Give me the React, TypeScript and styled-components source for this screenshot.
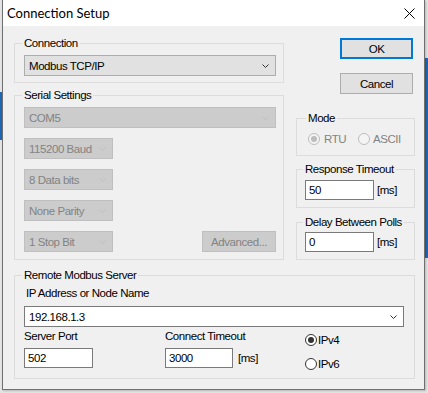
import React from "react";
import styled, { createGlobalStyle } from "styled-components";

const UI = '"Liberation Sans", Arial, sans-serif';
const FS = "11.5px";
const LS = "-0.45px";

const Global = createGlobalStyle`
  html, body { margin: 0; padding: 0; }
  body {
    width: 428px;
    height: 393px;
    overflow: hidden;
    font-family: ${UI};
    white-space: nowrap;
    letter-spacing: ${LS};
    background:
      linear-gradient(#1f66b5, #1f66b5) right 0 top 58px / 3px 200px no-repeat,
      linear-gradient(#1f66b5, #1f66b5) left 0 top 92px / 2px 48px no-repeat,
      #e4e4e4;
  }
`;

const Screen = styled.div`
  width: 428px;
  height: 393px;
  padding-left: 2px;
  box-sizing: border-box;
`;

const Window = styled.div`
  width: 423px;
  height: 390px;
  box-sizing: border-box;
  border: 1px solid #6f6f6f;
  border-top: none;
  display: flex;
  flex-direction: column;
  box-shadow: 1px 1px 2px rgba(0, 0, 0, 0.2);
`;

const TitleBar = styled.div`
  height: 26px;
  flex: none;
  background: #ffffff;
  display: flex;
  align-items: center;
  justify-content: space-between;
  padding: 0 9px 0 4px;
`;

const Title = styled.div`
  font-family: Lato, "Liberation Sans", sans-serif;
  font-size: 13px;
  letter-spacing: 0;
  line-height: 26px;
  color: #000;
`;

const Body = styled.div`
  flex: 1;
  min-height: 0;
  background: #f0f0f0;
  padding: 10px 9px 0 11px;
  display: flex;
  flex-direction: column;
  gap: 8px;
`;

const Top = styled.div`
  display: flex;
  gap: 12px;
`;

const Column = styled.div<{ $w: number }>`
  width: ${(p) => p.$w}px;
  display: flex;
  flex-direction: column;
`;

const Group = styled.fieldset<{ $pad: string; $mt?: number }>`
  margin: ${(p) => p.$mt ?? 0}px 0 0 0;
  min-width: 0;
  border: 1px solid #dcdcdc;
  padding: ${(p) => p.$pad};
  font-size: ${FS};
  color: #000;
`;

const Legend = styled.legend`
  padding: 0 2px;
  margin-left: -2px;
  font-size: ${FS};
  line-height: 14px;
  color: #000;
`;

const ComboBox = styled.div<{ $w?: number; $kind: "enabled" | "disabled" | "edit" }>`
  box-sizing: border-box;
  height: 21px;
  width: ${(p) => (p.$w ? `${p.$w}px` : "100%")};
  display: flex;
  align-items: center;
  justify-content: space-between;
  padding: 0 6px 0 4px;
  font-size: ${FS};
  border: 1px solid
    ${(p) => (p.$kind === "enabled" ? "#adadad" : p.$kind === "disabled" ? "#bfbfbf" : "#7a7a7a")};
  background: ${(p) => (p.$kind === "enabled" ? "#e1e1e1" : p.$kind === "disabled" ? "#cccccc" : "#ffffff")};
  color: ${(p) => (p.$kind === "disabled" ? "#838383" : "#000")};
`;

const RowStack = styled.div`
  display: flex;
  flex-direction: column;
  gap: 10px;
`;

const SplitRow = styled.div`
  display: flex;
  justify-content: space-between;
`;

const PushButton = styled.div<{ $default?: boolean; $disabled?: boolean; $w: number; $mt?: number }>`
  box-sizing: border-box;
  width: ${(p) => p.$w}px;
  height: 21px;
  margin-top: ${(p) => p.$mt ?? 0}px;
  display: flex;
  align-items: center;
  justify-content: center;
  font-size: ${FS};
  border: ${(p) => (p.$default ? "2px solid #0078d7" : p.$disabled ? "1px solid #bfbfbf" : "1px solid #adadad")};
  background: ${(p) => (p.$disabled ? "#cccccc" : "#e1e1e1")};
  color: ${(p) => (p.$disabled ? "#838383" : "#000")};
`;

const ButtonSlot = styled.div`
  align-self: flex-end;
  margin-right: 2px;
`;

const RadioRow = styled.div<{ $gap: number }>`
  display: flex;
  align-items: center;
  gap: ${(p) => p.$gap}px;
`;

const RadioItem = styled.div<{ $gap: number; $disabled?: boolean }>`
  display: flex;
  align-items: center;
  gap: ${(p) => p.$gap}px;
  height: 13px;
  font-size: ${FS};
  color: ${(p) => (p.$disabled ? "#838383" : "#000")};
`;

const FieldRow = styled.div<{ $gap: number }>`
  display: flex;
  align-items: center;
  gap: ${(p) => p.$gap}px;
  font-size: ${FS};
`;

const TextBox = styled.div<{ $w: number }>`
  box-sizing: border-box;
  width: ${(p) => p.$w}px;
  height: 20px;
  border: 1px solid #7a7a7a;
  background: #fff;
  padding-left: 3px;
  display: flex;
  align-items: center;
  font-size: ${FS};
  color: #000;
`;

const Label = styled.div<{ $ml?: number }>`
  font-size: ${FS};
  line-height: 14px;
  margin-left: ${(p) => p.$ml ?? 0}px;
  color: #000;
`;

const ServerGrid = styled.div`
  display: grid;
  grid-template-columns: 141px 140px 1fr;
  margin-top: 2px;
`;

const Cell = styled.div`
  display: flex;
  flex-direction: column;
  gap: 5px;
`;

const RadioStack = styled.div`
  display: flex;
  flex-direction: column;
  gap: 11px;
  padding-top: 4px;
`;

const Spaced = styled.div<{ $mt: number }>`
  margin-top: ${(p) => p.$mt}px;
`;

const Chevron = ({ color }: { color: string }) => (
  <svg width="7" height="4" viewBox="0 0 7 4">
    <path d="M0.5 0.5 L3.5 3.5 L6.5 0.5" fill="none" stroke={color} strokeWidth="1" />
  </svg>
);

const Radio = ({ checked, disabled }: { checked?: boolean; disabled?: boolean }) => {
  const ring = disabled ? "#bcbcbc" : "#333333";
  return (
    <svg width="12" height="12" viewBox="0 0 12 12">
      <circle cx="6" cy="6" r="5.5" fill={disabled ? "#f4f4f4" : "#ffffff"} stroke={ring} strokeWidth="1" />
      {checked && <circle cx="6" cy="6" r="3" fill={ring} />}
    </svg>
  );
};

const CloseIcon = () => (
  <svg width="11" height="11" viewBox="0 0 11 11">
    <path d="M0.5 0.5 L10.5 10.5 M10.5 0.5 L0.5 10.5" stroke="#000" strokeWidth="1" />
  </svg>
);

export default function App() {
  return (
    <Screen>
      <Global />
      <Window>
        <TitleBar>
          <Title>Connection Setup</Title>
          <CloseIcon />
        </TitleBar>
        <Body>
          <Top>
            <Column $w={270}>
              <Group $pad="5px 7px 6px 9px">
                <Legend>Connection</Legend>
                <ComboBox $kind="enabled">
                  <span>Modbus TCP/IP</span>
                  <Chevron color="#333" />
                </ComboBox>
              </Group>
              <Group $pad="5px 7px 7px 9px" $mt={5}>
                <Legend>Serial Settings</Legend>
                <RowStack>
                  <ComboBox $kind="disabled">
                    <span>COM5</span>
                    <Chevron color="#bfbfbf" />
                  </ComboBox>
                  <ComboBox $kind="disabled" $w={89}>
                    <span>115200 Baud</span>
                    <Chevron color="#bfbfbf" />
                  </ComboBox>
                  <ComboBox $kind="disabled" $w={89}>
                    <span>8 Data bits</span>
                    <Chevron color="#bfbfbf" />
                  </ComboBox>
                  <ComboBox $kind="disabled" $w={89}>
                    <span>None Parity</span>
                    <Chevron color="#bfbfbf" />
                  </ComboBox>
                  <SplitRow>
                    <ComboBox $kind="disabled" $w={89}>
                      <span>1 Stop Bit</span>
                      <Chevron color="#bfbfbf" />
                    </ComboBox>
                    <PushButton $disabled $w={74}>
                      Advanced...
                    </PushButton>
                  </SplitRow>
                </RowStack>
              </Group>
            </Column>
            <Column $w={119}>
              <ButtonSlot>
                <PushButton $default $w={73} $mt={2}>
                  OK
                </PushButton>
              </ButtonSlot>
              <ButtonSlot>
                <PushButton $w={73} $mt={14}>
                  Cancel
                </PushButton>
              </ButtonSlot>
              <Group $pad="7px 4px 10px 11px" $mt={17}>
                <Legend>Mode</Legend>
                <RadioRow $gap={12}>
                  <RadioItem $gap={4} $disabled>
                    <Radio checked disabled />
                    RTU
                  </RadioItem>
                  <RadioItem $gap={3} $disabled>
                    <Radio disabled />
                    ASCII
                  </RadioItem>
                </RadioRow>
              </Group>
              <Group $pad="4px 4px 7px 8px" $mt={6}>
                <Legend>Response Timeout</Legend>
                <FieldRow $gap={3}>
                  <TextBox $w={69}>50</TextBox>
                  [ms]
                </FieldRow>
              </Group>
              <Group $pad="3px 4px 7px 8px" $mt={7}>
                <Legend>Delay Between Polls</Legend>
                <FieldRow $gap={3}>
                  <TextBox $w={69}>0</TextBox>
                  [ms]
                </FieldRow>
              </Group>
            </Column>
          </Top>
          <Group $pad="4px 10px 8px 9px">
            <Legend>Remote Modbus Server</Legend>
            <Label $ml={2}>IP Address or Node Name</Label>
            <Spaced $mt={6}>
              <ComboBox $kind="edit">
                <span>192.168.1.3</span>
                <Chevron color="#333" />
              </ComboBox>
            </Spaced>
            <ServerGrid>
              <Cell>
                <Label>Server Port</Label>
                <TextBox $w={69}>502</TextBox>
              </Cell>
              <Cell>
                <Label>Connect Timeout</Label>
                <FieldRow $gap={5}>
                  <TextBox $w={68}>3000</TextBox>
                  [ms]
                </FieldRow>
              </Cell>
              <RadioStack>
                <RadioItem $gap={1}>
                  <Radio checked />
                  IPv4
                </RadioItem>
                <RadioItem $gap={1}>
                  <Radio />
                  IPv6
                </RadioItem>
              </RadioStack>
            </ServerGrid>
          </Group>
        </Body>
      </Window>
    </Screen>
  );
}
